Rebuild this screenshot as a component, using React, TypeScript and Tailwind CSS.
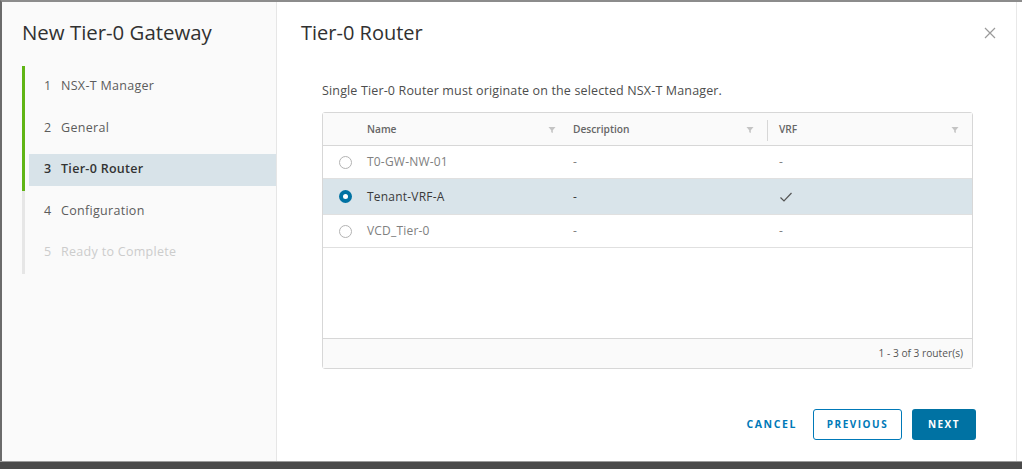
import React from 'react';

type Row = { name: string; description: string; vrf: boolean; selected?: boolean };

const rows: Row[] = [
    { name: 'T0-GW-NW-01', description: '-', vrf: false },
    { name: 'Tenant-VRF-A', description: '-', vrf: true, selected: true },
    { name: 'VCD_Tier-0', description: '-', vrf: false },
];

const steps = [
    { n: 1, label: 'NSX-T Manager', state: 'done' },
    { n: 2, label: 'General', state: 'done' },
    { n: 3, label: 'Tier-0 Router', state: 'current' },
    { n: 4, label: 'Configuration', state: 'todo' },
    { n: 5, label: 'Ready to Complete', state: 'disabled' },
];

const FilterIcon = () => (
    <svg width="8" height="8" viewBox="0 0 8 8" className="text-[#c4c4c4]">
        <path d="M0.5 1 H7.5 L4.8 4.2 V7 L3.2 6.2 V4.2 Z" fill="currentColor" />
    </svg>
);

const Radio: React.FC<{ checked?: boolean }> = ({ checked }) => (
    checked ? (
        <div className="w-[13px] h-[13px] rounded-full bg-[#0072a3] flex items-center justify-center">
            <div className="w-[5px] h-[5px] rounded-full bg-white"></div>
        </div>
    ) : (
        <div className="w-[13px] h-[13px] rounded-full border border-[#b3b3b3] bg-white"></div>
    )
);

const Wizard = () => {
    return (
        <div className="flex flex-1 min-h-0">

            {/* step nav */}
            <div className="w-[275px] shrink-0 bg-[#fafafa] border-r border-[#e6e6e6] flex flex-col">
                <div className="pl-[20px] pt-[16px] text-[20.4px] leading-[28px] text-[#313131]">
                    New Tier-0 Gateway
                </div>
                <div className="mt-[20px] ml-[20px] flex flex-col">
                    {steps.map((s) => {
                        const bar = s.state === 'done' || s.state === 'current' ? 'border-[#60b515]' : 'border-[#e6e6e6]';
                        const text =
                            s.state === 'current' ? 'text-[#333] font-semibold' :
                            s.state === 'disabled' ? 'text-[#cccccc]' : 'text-[#5c5c5c]';
                        return (
                            <div key={s.n} className={`flex border-l-[3px] ${bar} h-[41.5px] items-center`}>
                                <div className={`flex-1 h-[32px] ml-[4px] flex items-center pl-[15px] text-[12.5px] tracking-[0.3px] ${text} ${s.state === 'current' ? 'bg-[#d8e3e9]' : ''}`}>
                                    <span className="w-[17px]">{s.n}</span>
                                    <span>{s.label}</span>
                                </div>
                            </div>
                        );
                    })}
                </div>
            </div>

            {/* content */}
            <div className="flex-1 bg-white flex flex-col pr-[24px]">
                <div className="flex items-center justify-between pl-[24px] pt-[15px] h-[46px]">
                    <div className="text-[20px] leading-[26px] text-[#313131]">Tier-0 Router</div>
                    <svg width="14" height="14" viewBox="0 0 14 14" className="mr-[-5px]">
                        <path d="M2 2 L12 12 M12 2 L2 12" stroke="#9a9a9a" strokeWidth="1.2" />
                    </svg>
                </div>

                <div className="pl-[45px] pr-[19px] flex flex-col">
                    <div className="mt-[36px] text-[12.5px] tracking-[0.15px] leading-[14px] text-[#4d4d4d]">
                        Single Tier-0 Router must originate on the selected NSX-T Manager.
                    </div>

                    <div className="mt-[14px] border border-[#d7d7d7] rounded-[3px] flex flex-col h-[257px]">
                        <div className="flex h-[33px] bg-[#fafafa] border-b border-[#d7d7d7] items-center pt-[2px] text-[10.2px] font-semibold text-[#666]">
                            <div className="w-[44px]"></div>
                            <div className="w-[206px] flex items-center justify-between pr-[17px]">
                                <span>Name</span>
                                <FilterIcon />
                            </div>
                            <div className="w-[194px] flex items-center justify-between pr-[13px] pl-[0px]">
                                <span>Description</span>
                                <FilterIcon />
                            </div>
                            <div className="w-px h-[21px] bg-[#d7d7d7]"></div>
                            <div className="flex-1 flex items-center justify-between pl-[11px] pr-[13px]">
                                <span>VRF</span>
                                <FilterIcon />
                            </div>
                        </div>

                        {rows.map((r) => (
                            <div
                                key={r.name}
                                className={`flex items-center border-b border-[#e0e0e0] text-[12px] tracking-[0.2px] ${r.selected ? 'h-[36px] bg-[#d9e4ea] text-[#3a3a3a]' : 'h-[33px] bg-white text-[#808080]'}`}
                            >
                                <div className="w-[44px] flex justify-center pl-[1px]">
                                    <Radio checked={r.selected} />
                                </div>
                                <div className="w-[206px]">{r.name}</div>
                                <div className="w-[195px]">{r.description}</div>
                                <div className="flex-1 pl-[11px]">
                                    {r.vrf ? (
                                        <svg width="14" height="12" viewBox="0 0 14 12">
                                            <path d="M1.5 6.5 L5 10 L12.5 2" fill="none" stroke="#555" strokeWidth="1.2" />
                                        </svg>
                                    ) : '-'}
                                </div>
                            </div>
                        ))}

                        <div className="flex-1"></div>

                        <div className="h-[30px] bg-[#fafafa] border-t border-[#d7d7d7] flex items-center justify-end pr-[9px] text-[10.2px] text-[#555]">
                            1 - 3 of 3 router(s)
                        </div>
                    </div>
                </div>

                <div className="mt-auto mb-[21px] flex justify-end items-center gap-[10px] pr-[16px]">
                    <button className="h-[31px] pl-[12px] pr-[6px] text-[10.5px] font-bold tracking-[1.6px] text-[#0079b8]">
                        CANCEL
                    </button>
                    <button className="h-[31px] w-[89px] rounded-[3px] border border-[#0079b8] text-[10px] font-bold tracking-[1.5px] text-[#0079b8] bg-white">
                        PREVIOUS
                    </button>
                    <button className="h-[31px] w-[64px] rounded-[3px] bg-[#0072a3] text-[10px] font-bold tracking-[1.5px] text-white">
                        NEXT
                    </button>
                </div>
            </div>
        </div>
    );
};

export default function App() {
    return (
        <div className="w-[1022px] h-[469px] flex flex-col bg-[#f2f2f2] font-['Open_Sans','Noto_Sans',sans-serif] overflow-hidden">
            <div className="flex flex-1 min-h-0 border-t-2 border-l-2 border-t-[#8c8c8c] border-l-[#6b6b6b]">
                <div className="flex flex-1 min-h-0 border-r border-[#e8e8e8]">
                    <Wizard />
                </div>
                <div className="w-[5px] bg-white"></div>
            </div>
            <div className="h-[8px] bg-[#4a4a4a] border-t border-[#9a9a9a]"></div>
        </div>
    );
}
